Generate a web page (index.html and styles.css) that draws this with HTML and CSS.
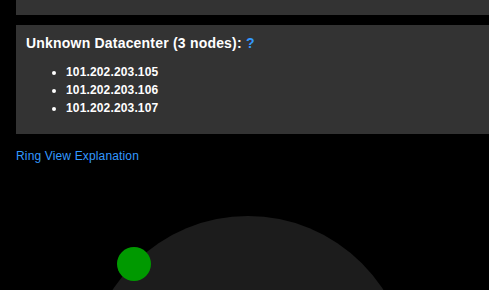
FILE: index.html
```html
<!DOCTYPE html>
<html>
<head>
<meta charset="utf-8">
<link rel="stylesheet" href="styles.css">
</head>
<body>
<div class="page">
  <div class="panel panel-top"></div>
  <div class="panel panel-dc">
    <h3 class="dc-title">Unknown Datacenter (3 nodes): <a class="help" href="#">?</a></h3>
    <ul class="node-list">
      <li>101.202.203.105</li>
      <li>101.202.203.106</li>
      <li>101.202.203.107</li>
    </ul>
  </div>
  <a class="explain" href="#">Ring View Explanation</a>
  <div class="ring-view">
    <div class="ring"></div>
    <div class="node node-up"></div>
  </div>
</div>
</body>
</html>
```
FILE: styles.css
```css
html, body {
  margin: 0;
  padding: 0;
  background: #000;
  overflow: hidden;
}
.page {
  width: 489px;
  height: 290px;
  padding: 0 0 0 16px;
  box-sizing: border-box;
  font-family: "Liberation Sans", Arial, Helvetica, sans-serif;
  color: #fff;
  position: relative;
  overflow: hidden;
}
.panel {
  background: #333333;
  margin-right: -20px;
}
.panel-top {
  height: 15px;
  margin-bottom: 10px;
}
.panel-dc {
  padding: 10px 10px 17px 10px;
}
.dc-title {
  margin: 0;
  font-size: 14px;
  font-weight: bold;
  line-height: 16px;
  letter-spacing: 0.2px;
}
.help {
  color: #3399ff;
  text-decoration: none;
}
.node-list {
  margin: 12px 0 0 0;
  padding-left: 40px;
  font-size: 12px;
  font-weight: bold;
  line-height: 18px;
  letter-spacing: 0.15px;
}
.explain {
  display: block;
  margin-top: 15px;
  font-size: 12px;
  line-height: 14px;
  letter-spacing: 0.15px;
  color: #3399ff;
  text-decoration: none;
}
.ring-view {
  position: relative;
  height: 140px;
  margin-left: -16px;
}
.ring {
  position: absolute;
  left: 87px;
  top: 53px;
  width: 322px;
  height: 322px;
  border-radius: 50%;
  background: #1c1c1c;
}
.node {
  position: absolute;
  width: 34px;
  height: 34px;
  border-radius: 50%;
}
.node-up {
  background: #009900;
  left: 117px;
  top: 84px;
}
```
